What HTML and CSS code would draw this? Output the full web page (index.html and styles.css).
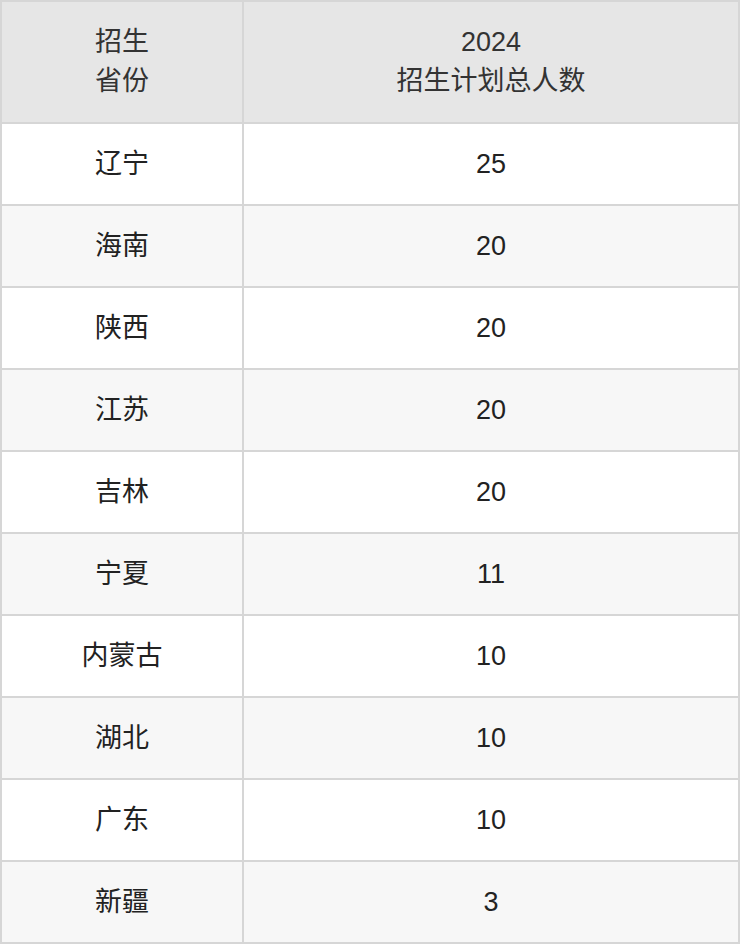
FILE: index.html
```html
<!DOCTYPE html>
<html lang="zh-CN">
<head>
<meta charset="utf-8">
<link rel="stylesheet" href="styles.css">
</head>
<body>
<table class="plan">
  <thead>
    <tr>
      <th class="col-prov">招生<br>省份</th>
      <th class="col-num">2024<br>招生计划总人数</th>
    </tr>
  </thead>
  <tbody>
    <tr><td>辽宁</td><td>25</td></tr>
    <tr><td>海南</td><td>20</td></tr>
    <tr><td>陕西</td><td>20</td></tr>
    <tr><td>江苏</td><td>20</td></tr>
    <tr><td>吉林</td><td>20</td></tr>
    <tr><td>宁夏</td><td>11</td></tr>
    <tr><td>内蒙古</td><td>10</td></tr>
    <tr><td>湖北</td><td>10</td></tr>
    <tr><td>广东</td><td>10</td></tr>
    <tr><td>新疆</td><td>3</td></tr>
  </tbody>
</table>
</body>
</html>
```

FILE: styles.css
```css
html, body {
  margin: 0;
  padding: 0;
  background: #ffffff;
}

.plan {
  width: 740px;
  border-collapse: collapse;
  table-layout: fixed;
  font-family: "Liberation Sans", "Noto Sans CJK SC", sans-serif;
  font-size: 27px;
  color: #222222;
}

.plan th,
.plan td {
  border: 2px solid #d6d6d6;
  text-align: center;
  vertical-align: middle;
  padding: 0;
}

.plan th {
  height: 120px;
  background: #e6e6e6;
  font-weight: normal;
  color: #333333;
  line-height: 39px;
}

.col-prov {
  width: 240px;
}

.plan td {
  height: 80px;
  line-height: 30px;
}

.plan tbody tr:nth-child(even) td {
  background: #f7f7f7;
}
```
